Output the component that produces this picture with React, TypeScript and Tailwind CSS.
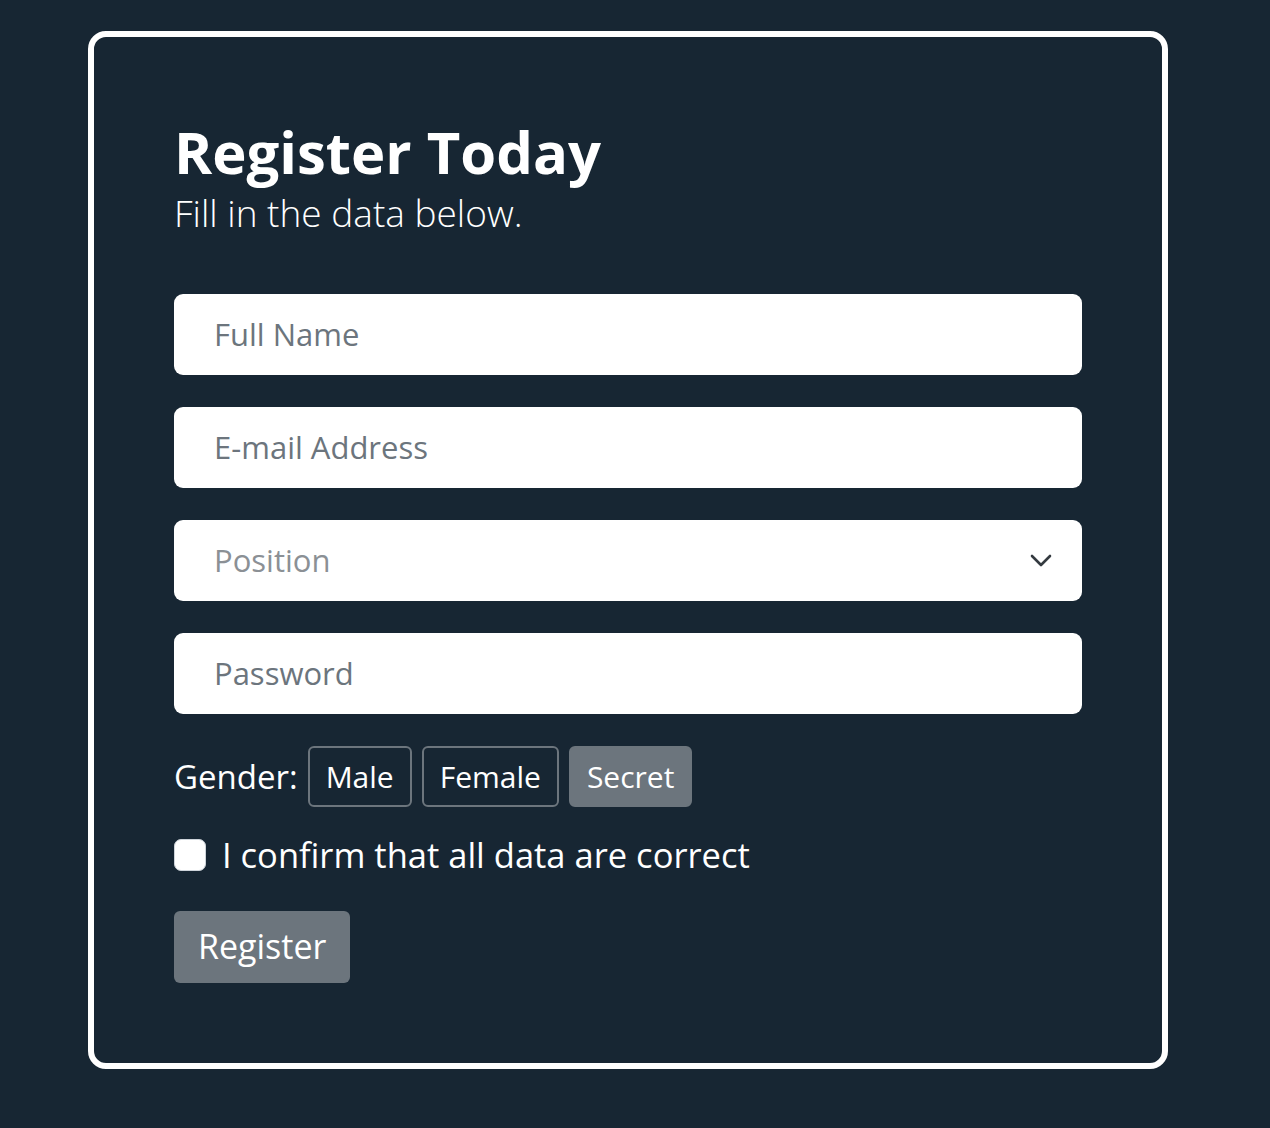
import React from 'react';

const fieldBase = 'w-full h-[81px] rounded-[9px] bg-white px-10 text-[31px] outline-none';
const inputClass = fieldBase + ' text-[#212529] placeholder-[#6c757d]';
const genderBtn = 'h-[61px] rounded-[6px] border-2 border-[#6c757d] px-[16px] text-[30px] text-white';

export default function App() {
    return (
        <div className="min-h-screen bg-[#172633] pt-[31px] pl-[88px] pb-[59px]" style={{ fontFamily: '"Open Sans", "Liberation Sans", sans-serif' }}>
            <div className="w-[1080px] rounded-[18px] border-[6px] border-white p-[80px]">
                <h1 className="text-[58px] font-bold leading-[1.2] text-white">Register Today</h1>
                <p className="mt-[4px] text-[37px] font-light leading-[1.2] text-white">Fill in the data below.</p>

                <form className="mt-[59px] flex flex-col gap-8" onSubmit={e => e.preventDefault()}>
                    <input className={inputClass} placeholder="Full Name" />
                    <input className={inputClass} placeholder="E-mail Address" />
                    <div className="relative">
                        <select defaultValue="" className={fieldBase + ' appearance-none text-[#8b9095]'}>
                            <option value="" disabled>Position</option>
                            <option>Developer</option>
                            <option>Designer</option>
                        </select>
                        <svg className="pointer-events-none absolute right-[30px] top-1/2 -translate-y-1/2" width="22" height="14" viewBox="0 0 22 14" fill="none">
                            <path d="M2 3l9 9 9-9" stroke="#343a40" strokeWidth="2.6" strokeLinecap="round" strokeLinejoin="round" />
                        </svg>
                    </div>
                    <input type="password" className={inputClass} placeholder="Password" />

                    <div className="flex h-[61px] items-center gap-[10px]">
                        <span className="text-[33px] text-white">Gender:</span>
                        <button type="button" className={genderBtn}>Male</button>
                        <button type="button" className={genderBtn}>Female</button>
                        <button type="button" className={genderBtn + ' bg-[#6c757d]'}>Secret</button>
                    </div>

                    <label className="flex h-[32px] items-center gap-4 text-[34.5px] leading-none text-white">
                        <span className="h-[32px] w-[32px] shrink-0 rounded-[7px] border border-[#ced4da] bg-white"></span>
                        I confirm that all data are correct
                    </label>

                    <div className="mt-2">
                        <button type="submit" className="h-[72px] rounded-[6px] bg-[#6c757d] px-6 text-[34px] text-white">Register</button>
                    </div>
                </form>
            </div>
        </div>
    );
}
